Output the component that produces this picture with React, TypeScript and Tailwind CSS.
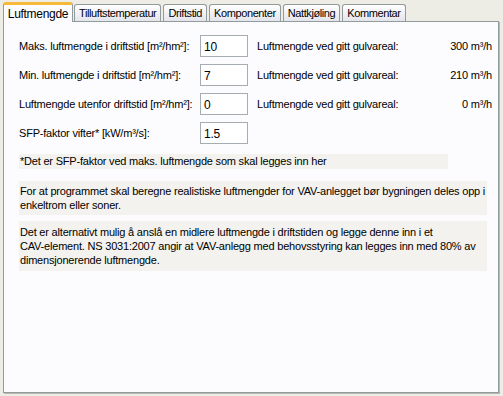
import React from 'react';

const tabs = ['Luftmengde', 'Tilluftstemperatur', 'Driftstid', 'Komponenter', 'Nattkjøling', 'Kommentar'];

const rows = [
  { label: 'Maks. luftmengde i driftstid [m²/hm²]:', value: '10', result: '300 m³/h' },
  { label: 'Min. luftmengde i driftstid [m²/hm²]:', value: '7', result: '210 m³/h' },
  { label: 'Luftmengde utenfor driftstid [m²/hm²]:', value: '0', result: '0 m³/h' },
  { label: 'SFP-faktor vifter* [kW/m³/s]:', value: '1.5', result: null },
];

export default function App() {
  const font = { fontFamily: '"Liberation Sans", Arial, sans-serif' };
  return (
    <div
      className="w-[503px] h-[396px] bg-[#EEEDE5] pt-[2px] pl-[3px] pr-[4px] pb-[3px] flex flex-col text-[11px] tracking-[-0.2px] text-black"
      style={font}
    >
      {/* Tab strip */}
      <div className="flex items-end h-[20px] relative z-10">
        {tabs.map((t, i) =>
          i === 0 ? (
            <div
              key={t}
              className="h-[20px] w-[70px] justify-center flex items-center bg-[#FCFCFE] border-x border-[#919B9C] border-t-[3px] border-t-[#F7B93A] rounded-t-[3px] text-[12px] tracking-[-0.3px] -mr-[1px]"
            >
              {t}
            </div>
          ) : (
            <div
              key={t}
              className="h-[17px] mb-[1px] ml-[2px] px-[4px] flex items-center bg-gradient-to-b from-white to-[#E4E4EC] border border-b-0 border-[#919B9C] rounded-t-[3px] text-[11px] tracking-[-0.4px]"
            >
              {t}
            </div>
          )
        )}
      </div>

      {/* Panel */}
      <div className="flex-1 -mt-[1px] border border-[#919B9C] bg-[#FCFCFE] shadow-[1px_1px_0_#B8B8B0] pt-[13px] pl-[15px] pr-[6px]">
        <div className="flex flex-col gap-[7px]">
          {rows.map((r) => (
            <div key={r.label} className="flex items-center h-[22px]">
              <span className="w-[181px] whitespace-nowrap">{r.label}</span>
              <div className="w-[48px] h-[22px] border border-[#A5ACB2] bg-white pl-[3px] pt-[2px] text-[12px]">
                {r.value}
              </div>
              {r.result && (
                <>
                  <span className="ml-[9px] w-[175px] whitespace-nowrap">Luftmengde ved gitt gulvareal:</span>
                  <span className="flex-1 text-right">{r.result}</span>
                </>
              )}
            </div>
          ))}
        </div>

        <div className="mt-[10px] w-[429px] h-[15px] bg-[#F3F2EE] leading-[15px] pl-[1px] whitespace-nowrap">
          *Det er SFP-faktor ved maks. luftmengde som skal legges inn her
        </div>

        <div className="mt-[12px] w-[468px] bg-[#F3F2EE] py-[3px] pl-[1px] leading-[14px] whitespace-nowrap">
          For at programmet skal beregne realistiske luftmengder for VAV-anlegget bør bygningen deles opp i
          <br />
          enkeltrom eller soner.
        </div>

        <div className="mt-[6px] w-[468px] bg-[#F3F2EE] py-[4px] pl-[1px] leading-[14px] whitespace-nowrap">
          Det er alternativt mulig å anslå en midlere luftmengde i driftstiden og legge denne inn i et
          <br />
          CAV-element. NS 3031:2007 angir at VAV-anlegg med behovsstyring kan legges inn med 80% av
          <br />
          dimensjonerende luftmengde.
        </div>
      </div>
    </div>
  );
}
